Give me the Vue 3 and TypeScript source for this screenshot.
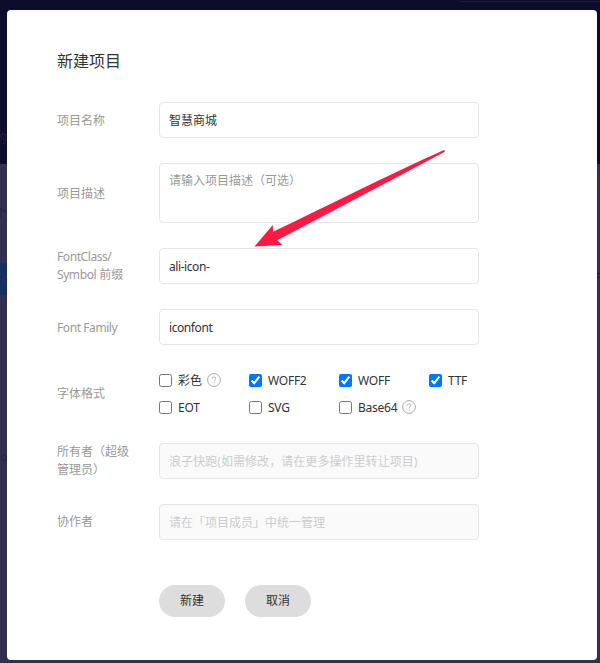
<script setup lang="ts">
import { reactive, ref } from 'vue'

interface FontFormat {
  name: string
  checked: boolean
  help?: boolean
  cjk?: boolean
}

const projectName = ref('智慧商城')
const description = ref('')
const prefix = ref('ali-icon-')
const family = ref('iconfont')

const formats = reactive<FontFormat[]>([
  { name: '彩色', checked: false, help: true, cjk: true },
  { name: 'WOFF2', checked: true },
  { name: 'WOFF', checked: true },
  { name: 'TTF', checked: true },
  { name: 'EOT', checked: false },
  { name: 'SVG', checked: false },
  { name: 'Base64', checked: false, help: true },
])
</script>

<template>
  <div class="page">
    <div class="backdrop">
      <div class="banner"><span class="top-line"></span></div>
      <span class="ghost ghost-mine">我的</span>
      <span class="ghost ghost-count">个</span>
      <span class="ghost ghost-tab">Fo</span>
      <span class="ghost ghost-user">no</span>
      <span class="ghost-mark"></span>
    </div>

    <main class="dialog">
      <h1>新建项目</h1>
      <form @submit.prevent>
        <div class="row">
          <div class="label single">项目名称</div>
          <input v-model="projectName" class="field" type="text" />
        </div>
        <div class="row">
          <div class="label single">项目描述</div>
          <textarea v-model="description" class="field area" placeholder="请输入项目描述（可选）"></textarea>
        </div>
        <div class="row">
          <div class="label"><span class="latin">FontClass/</span><br /><span class="latin">Symbol</span> 前缀</div>
          <input v-model="prefix" class="field latin" type="text" />
        </div>
        <div class="row">
          <div class="label single latin">Font Family</div>
          <input v-model="family" class="field latin" type="text" />
        </div>
        <div class="row">
          <div class="label">字体格式</div>
          <div class="formats">
            <label v-for="format in formats" :key="format.name" class="format">
              <input v-model="format.checked" type="checkbox" />
              <span :class="{ caps: !format.cjk }">{{ format.name }}</span>
              <svg v-if="format.help" class="help" viewBox="0 0 14 14">
                <circle cx="7" cy="7" r="6.4" />
                <path d="M5.3 5.7C5.4 4.5 6.1 4 7 4s1.7.6 1.7 1.5c0 1.2-1.6 1.3-1.6 2.7M7.1 9.3v1" />
              </svg>
            </label>
          </div>
        </div>
        <div class="row">
          <div class="label">所有者（超级<br />管理员）</div>
          <input class="field owner" type="text" disabled placeholder="浪子快跑(如需修改，请在更多操作里转让项目)" />
        </div>
        <div class="row">
          <div class="label">协作者</div>
          <input class="field" type="text" disabled placeholder="请在「项目成员」中统一管理" />
        </div>
        <div class="actions">
          <button type="submit">新建</button>
          <button type="button">取消</button>
        </div>
      </form>
      <svg class="arrow" viewBox="0 0 192 98">
        <path d="M0.5 96.5 18.8 75 19 81.8C73 56 132 26 189.5 0.2Q191.6 0 190.8 1.8C134 32 79 61 23.3 90.2L28.5 95Z" />
      </svg>
    </main>
  </div>
</template>

<style>
body {
  margin: 0;
  overflow: hidden;
}
</style>

<style scoped>
* {
  box-sizing: border-box;
}

.page {
  position: relative;
  height: 663px;
  padding: 10px 3px 3px 7px;
  overflow: hidden;
  font-family: "Noto Sans", "Noto Sans CJK SC", sans-serif;
  font-size: 12px;
  color: #333;
}

.backdrop {
  position: absolute;
  inset: 0;
  background: #332f50;
}

.banner {
  height: 164px;
  background: #0e0c2c;
}

.top-line {
  position: absolute;
  top: -8px;
  left: 455px;
  width: 160px;
  height: 10px;
  border: 1px solid #1c193b;
  border-radius: 5px;
}

.ghost {
  position: absolute;
  left: -5px;
  line-height: 18px;
  white-space: nowrap;
  color: #262044;
}

.ghost-mine {
  top: 130px;
  left: -17px;
}

.ghost-count {
  top: 205px;
}

.ghost-tab {
  top: 263px;
  left: 0;
  width: 20px;
  height: 32px;
  line-height: 32px;
  text-indent: -5px;
  color: #332e5e;
  background: #143063;
}

.ghost-user {
  top: 448px;
  left: -7px;
}

.ghost-mark {
  position: absolute;
  top: 273px;
  right: 0;
  width: 3px;
  height: 5px;
  border: solid #1c1840;
  border-width: 1px 0;
}

.dialog {
  position: relative;
  height: 650px;
  padding: 39px 50px;
  background: #fff;
  border-radius: 4px;
}

h1 {
  height: 24px;
  margin: 0 0 29px;
  font-size: 16px;
  font-weight: 400;
  line-height: 24px;
}

form {
  display: flex;
  flex-direction: column;
  gap: 25px;
}

.row {
  display: flex;
  align-items: center;
}

.label {
  flex: 0 0 102px;
  line-height: 18px;
  white-space: nowrap;
  color: #999;
}

.single {
  padding-top: 2px;
}

.latin {
  letter-spacing: -0.42px;
}

.caps {
  letter-spacing: -0.25px;
}

.field {
  display: block;
  width: 320px;
  height: 36px;
  margin: 0;
  padding: 0 9px;
  font-family: inherit;
  font-size: 12px;
  color: #333;
  background: #fff;
  border: 1px solid #e6e6e6;
  border-radius: 4px;
  outline: none;
}

.area {
  height: 60px;
  padding: 8px 9px;
  line-height: 18px;
  resize: none;
}

.field::placeholder {
  color: #999;
  opacity: 1;
}

.field:disabled {
  background: #fafafa;
}

.field:disabled::placeholder {
  color: #ccc;
}

.owner {
  letter-spacing: 0.06px;
}

.formats {
  display: grid;
  grid-template-columns: repeat(4, 90px);
  grid-auto-rows: 21px;
  row-gap: 6px;
}

.format {
  display: flex;
  align-items: center;
  line-height: 18px;
}

.format input {
  width: 13px;
  height: 13px;
  margin: 0 6px 0 0;
}

.help {
  width: 14px;
  height: 14px;
  margin: 0 0 1px 5px;
  fill: none;
  stroke: #aaa;
  stroke-width: 1;
}

.actions {
  display: flex;
  gap: 20px;
  padding: 20px 0 0 102px;
}

button {
  width: 66px;
  height: 32px;
  padding: 0 0 2px;
  font-family: inherit;
  font-size: 12px;
  color: #333;
  background: #ddd;
  border: 0;
  border-radius: 16px;
}

.arrow {
  position: absolute;
  top: 140px;
  left: 247px;
  width: 192px;
  height: 98px;
  fill: #ff1a43;
  pointer-events: none;
}
</style>
